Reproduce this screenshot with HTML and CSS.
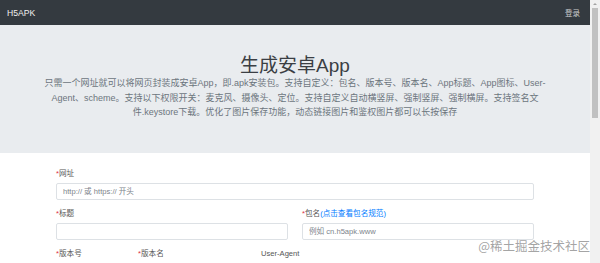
FILE: index.html
```html
<!DOCTYPE html>
<html lang="zh-CN">
<head>
    <meta charset="UTF-8" />
    <meta name="viewport" content="width=device-width, initial-scale=1.0"/>
    <title>H5APK - 生成安卓App</title>
    <link rel="stylesheet" href="styles.css">
</head>
<body>
    <div class="page">
        <div class="main">
            <nav class="navbar">
                <a class="brand" href="#">H5APK</a>
                <a class="login" href="#">登录</a>
            </nav>

            <header class="jumbotron">
                <h1 class="title">生成安卓App</h1>
                <p class="lead">只需一个网址就可以将网页封装成安卓App，即.apk安装包。支持自定义：包名、版本号、版本名、App标题、App图标、User-Agent、scheme。支持以下权限开关：麦克风、摄像头、定位。支持自定义自动横竖屏、强制竖屏、强制横屏。支持签名文件.keystore下载。优化了图片保存功能，动态链接图片和鉴权图片都可以长按保存</p>
            </header>

            <form class="container">
                <div class="form-group">
                    <label><span class="req">*</span>网址</label>
                    <input class="input" type="text" placeholder="http:// 或 https:// 开头">
                </div>
                <div class="row row-half">
                    <div class="form-group">
                        <label><span class="req">*</span>标题</label>
                        <input class="input" type="text">
                    </div>
                    <div class="form-group">
                        <label><span class="req">*</span>包名<a class="rule-link" href="#">(点击查看包名规范)</a></label>
                        <input class="input" type="text" placeholder="例如 cn.h5apk.www">
                    </div>
                </div>
                <div class="row row-third">
                    <div class="form-group">
                        <label><span class="req">*</span>版本号</label>
                        <input class="input" type="text">
                    </div>
                    <div class="form-group">
                        <label><span class="req">*</span>版本名</label>
                        <input class="input" type="text">
                    </div>
                    <div class="form-group">
                        <label>User-Agent</label>
                        <input class="input" type="text">
                    </div>
                </div>
            </form>
        </div>

        <div class="scrollbar">
            <span class="scroll-arrow"></span>
            <span class="scroll-thumb"></span>
        </div>
    </div>

    <div class="watermark">@稀土掘金技术社区</div>
</body>
</html>
```

FILE: styles.css
```css
* {
    margin: 0;
    padding: 0;
    box-sizing: border-box;
}

:root {
    --dark: #343a40;
    --jumbo: #e9ecef;
    --text: #495057;
    --muted: #6c757d;
    --border: #dde1e5;
    --danger: #dc3545;
    --link: #007bff;
}

html, body {
    height: 263px;
    overflow: hidden;
}

body {
    font-family: "Liberation Sans", "Noto Sans CJK SC", sans-serif;
    color: var(--text);
    background: #fff;
}

.page {
    display: flex;
    height: 100%;
}

.main {
    flex: 1;
    min-width: 0;
}

/* top bar */
.navbar {
    height: 25px;
    background: var(--dark);
    display: flex;
    align-items: center;
    justify-content: space-between;
    padding: 0 10px 0 7px;
}

.brand {
    color: #f1f1f1;
    font-size: 8.6px;
    text-decoration: none;
}

.login {
    color: rgba(255, 255, 255, 0.75);
    font-size: 7.5px;
    text-decoration: none;
}

/* hero */
.jumbotron {
    background: var(--jumbo);
    height: 128px;
    padding-top: 30px;
    text-align: center;
}

.title {
    font-size: 19px;
    font-weight: 400;
    line-height: 21px;
    color: #3b3f44;
}

.lead {
    max-width: 504px;
    margin: 0 auto;
    font-size: 9px;
    line-height: 14.5px;
    color: var(--muted);
}

/* form */
.container {
    width: 478px;
    margin: 15px auto 0;
}

.form-group {
    margin-bottom: 8px;
}

.form-group label {
    display: block;
    font-size: 7.6px;
    line-height: 11px;
    margin-bottom: 4px;
    color: #555;
}

.req {
    color: var(--danger);
}

.rule-link {
    color: var(--link);
    text-decoration: none;
}

.input {
    display: block;
    width: 100%;
    height: 17px;
    padding: 0 6px;
    border: 1px solid var(--border);
    border-radius: 2px;
    font-family: inherit;
    font-size: 7.6px;
    color: var(--text);
    background: #fff;
}

.input::placeholder {
    color: #7d848b;
}

.row {
    display: grid;
    column-gap: 14px;
}

.row-half {
    grid-template-columns: 1fr 1fr;
}

.row-third {
    grid-template-columns: 68px 109px 1fr;
}

/* fake window scrollbar */
.scrollbar {
    width: 10px;
    background: #f1f1f1;
    display: flex;
    flex-direction: column;
    align-items: center;
}

.scroll-arrow {
    margin-top: 3px;
    width: 0;
    height: 0;
    border-left: 2px solid transparent;
    border-right: 2px solid transparent;
    border-bottom: 2px solid #a3a3a3;
}

.scroll-thumb {
    margin-top: 3px;
    width: 6px;
    height: 110px;
    background: #c1c1c1;
}

.watermark {
    position: absolute;
    right: 10px;
    top: 236px;
    font-family: "Noto Sans CJK SC", sans-serif;
    font-size: 12.5px;
    color: rgba(140, 140, 140, 0.8);
    text-shadow: 0 0 1px #fff;
}
```
